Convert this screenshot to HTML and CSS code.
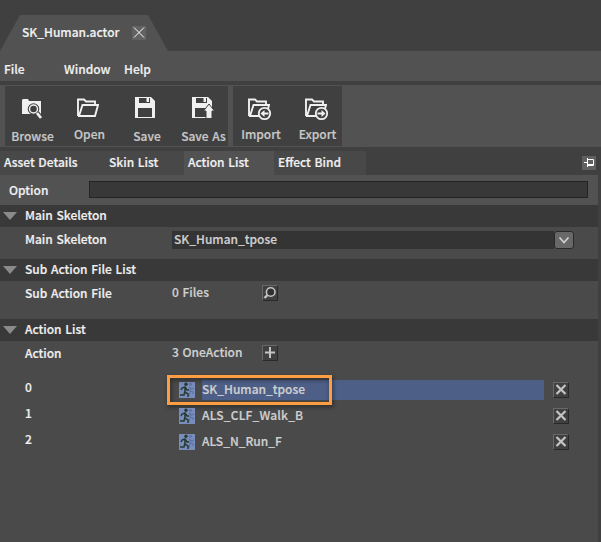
FILE: index.html
```html
<!DOCTYPE html>
<html lang="en">
<head>
<meta charset="utf-8">
<title>SK_Human.actor</title>
<link rel="stylesheet" href="styles.css">
</head>
<body>
<svg class="defs" width="0" height="0">
  <symbol id="floppy" viewBox="0 0 22 22"><path fill="#f0f0f0" fill-rule="evenodd" d="M1 1h16l4 4v17H1zM5 2v5h11V2zM4 12v9h14v-9z"/><path fill="#f0f0f0" d="M12.500 2h2.500v4h-2.500z"/></symbol>
  <symbol id="folder" viewBox="0 0 22 20"><path fill="none" stroke="#f0f0f0" stroke-width="1.900" d="M1 18V1.500h6l2 2h9V7M1 18h17l3-11H5.500L2 18"/></symbol>
  <symbol id="runner" viewBox="0 0 16 16"><path fill="#788dbc" d="M0 0h16v16H0z"/><g fill="none" stroke="#5f73a3" stroke-width="1.100"><circle cx="11.500" cy="2.500" r=".9"/><path d="M10 5l3 2 2-1M11 6v4l-1 4M11 9l3 1v2"/></g><circle cx="7" cy="2.300" r="1.700" fill="#263b30"/><path fill="none" stroke="#263b30" stroke-width="1.500" d="M2 8l1-2 3-1 2 3h2M6 5v5l3 2v3M6 9l-1 4H1"/></symbol>
  <symbol id="cross" viewBox="0 0 16 16"><path stroke="#c4c4c4" stroke-width="2.200" d="M3.500 3l9 9M12.500 3l-9 9"/></symbol>
</svg>
<div class="window">
  <header class="titlebar"><div class="doc-tab"><span class="t doc-name">SK_Human.actor</span><svg class="close" viewBox="0 0 14 14"><path stroke="#fff" d="M2 1.500l10 10M12 1.500l-10 10"/></svg></div></header>
  <nav class="menu"><span class="t m1">File</span><span class="t m2">Window</span><span class="t m3">Help</span></nav>
  <div class="toolbar">
    <div class="group main-tools">
      <div class="tool browse"><svg width="22" height="22" viewBox="0 0 22 22"><path fill="#f0f0f0" d="M1 2l1-1h5l1 2h12v13H1z"/><circle cx="12.500" cy="11" r="5.800" fill="#404040"/><circle cx="12.500" cy="11" r="4" fill="#404040" stroke="#f0f0f0" stroke-width="1.500"/><path stroke="#404040" stroke-width="5" d="M16 15l4 5"/><path stroke="#f0f0f0" stroke-width="2.800" d="M16 15l4 5"/></svg><span class="t">Browse</span></div>
      <div class="tool open"><svg width="22" height="20"><use href="#folder"/></svg><span class="t">Open</span></div>
      <div class="tool save"><svg width="22" height="22"><use href="#floppy"/></svg><span class="t">Save</span></div>
      <div class="tool saveas"><svg width="24" height="23" viewBox="0 0 24 23"><use href="#floppy" width="22" height="22"/><path fill="#f0f0f0" stroke="#404040" stroke-width="1" d="M18 8l5.500 7h-2.500v7.500h-6V15h-2.500z"/></svg><span class="t">Save As</span></div>
    </div>
    <div class="group io-tools">
      <div class="tool import"><svg width="24" height="23" viewBox="0 0 24 23"><use href="#folder" width="22" height="20"/><circle cx="16.500" cy="15.500" r="5.700" fill="#404040" stroke="#f0f0f0" stroke-width="1.800"/><path fill="#f0f0f0" d="M12.500 15.500l4-3.500v2.500h4v2h-4V19z"/></svg><span class="t">Import</span></div>
      <div class="tool export"><svg width="24" height="23" viewBox="0 0 24 23"><use href="#folder" width="22" height="20"/><circle cx="16.500" cy="15.500" r="5.700" fill="#404040" stroke="#f0f0f0" stroke-width="1.800"/><path fill="#f0f0f0" d="M20.500 15.500l-4-3.500v2.500h-4v2h4V19z"/></svg><span class="t">Export</span></div>
    </div>
  </div>
  <div class="tabs"><span class="t tab a">Asset Details</span><span class="t tab b">Skin List</span><span class="t tab c">Action List</span><span class="t tab d">Effect Bind</span><svg class="pin" width="14" height="14"><path fill="#606060" d="M0 0h14v14H0z"/><path fill="none" stroke="#fff" d="M2 6.500h3M5.500 2v9M5.500 3.500h6v6h-6M6 8.500h5"/></svg></div>
  <main class="panel">
    <div class="option"><label class="t">Option</label><div class="field"></div></div>
    <h2 class="t section">Main Skeleton</h2>
    <div class="body skeleton"><span class="t label">Main Skeleton</span><div class="t combo">SK_Human_tpose</div><div class="drop"><svg width="18" height="16"><path fill="none" stroke="#d0d0d0" stroke-width="1.800" d="M4.500 5.500l4.500 5 4.500-5"/></svg></div></div>
    <h2 class="t section">Sub Action File List</h2>
    <div class="body files"><span class="t label">Sub Action File</span><span class="t count">0 Files</span><div class="button"><svg viewBox="0 0 16 16"><circle cx="8.700" cy="7" r="4.300" fill="#303030" stroke="#c4c4c4" stroke-width="1.600"/><path stroke="#c4c4c4" stroke-width="2.400" d="M5.500 10L2.500 13"/></svg></div></div>
    <h2 class="t section">Action List</h2>
    <div class="body actions"><span class="t label">Action</span><span class="t count">3 OneAction</span><div class="button"><svg viewBox="0 0 16 16"><path stroke="#c4c4c4" stroke-width="2" d="M3 7.500h10M8 2v11"/></svg></div></div>
    <div class="list">
      <div class="row selected"><span class="t index">0</span><svg class="run"><use href="#runner"/></svg><span class="t name">SK_Human_tpose</span><div class="button"><svg><use href="#cross"/></svg></div><div class="highlight"></div></div>
      <div class="row"><span class="t index">1</span><svg class="run"><use href="#runner"/></svg><span class="t name wide">ALS_CLF_Walk_B</span><div class="button"><svg><use href="#cross"/></svg></div></div>
      <div class="row"><span class="t index">2</span><svg class="run"><use href="#runner"/></svg><span class="t name">ALS_N_Run_F</span><div class="button"><svg><use href="#cross"/></svg></div></div>
    </div>
  </main>
</div>
</body>
</html>
```
FILE: styles.css
```css
* { box-sizing: border-box; }
body { margin: 0; background: #404040; color: #f0f0f0; font: 500 12px/20px "Noto Sans CJK SC", "Noto Sans", sans-serif; word-spacing: 1px; -webkit-text-stroke: 0.2px currentColor; }
svg { display: block; flex: none; }
.defs { position: absolute; }
.t { white-space: nowrap; }
.window { width: 601px; height: 542px; overflow: hidden; display: flex; flex-direction: column; }
.titlebar { height: 51px; padding-top: 15px; flex: none; }
.doc-tab { width: 168px; height: 36px; background: #525252; clip-path: polygon(20px 0, 148px 0, 168px 100%, 0 100%); display: flex; padding: 8px 0 0 22px; }
.doc-name { width: 110px; line-height: 18px; }
.close { width: 14px; height: 14px; background: #626262; margin-top: 3px; }
.menu { height: 30px; background: #525252; display: flex; padding: 8px 0 0 4px; flex: none; }
.m1 { width: 60px; }
.m2 { width: 60px; }
.toolbar { height: 62px; margin: 4px 0; background: #525252; display: flex; gap: 5px; padding: 1px 0 1px 5px; flex: none; }
.group { background: #404040; display: flex; height: 60px; color: #c8c8c8; }
.main-tools { width: 223px; }
.io-tools { width: 109px; }
.tool { display: flex; flex-direction: column; align-items: center; width: 57px; flex: none; }
.tool .t { margin-top: auto; }
.tool svg { margin-left: -3px; }
.browse { padding: 12px 0 0; width: 55px; }
.browse svg { margin-left: -1px; }
.open { padding: 12px 0 2px; width: 59px; }
.save { padding: 10px 0 0; width: 56px; }
.save svg { margin-left: -5px; }
.saveas { padding: 10px 0 0; }
.saveas svg { margin-left: -2px; }
.io-tools .tool { padding: 12px 0 2px; }
.io-tools svg { margin-left: -2px; }
.import { width: 56px; }
.tabs { height: 24px; display: flex; flex: none; }
.tab { background: #484848; line-height: 21px; }
.a { width: 105px; padding-left: 4px; }
.b { width: 79px; padding-left: 4px; }
.c { width: 90px; padding-left: 4px; background: #525252; }
.d { width: 92px; padding-left: 4px; }
.pin { margin: 9px 5px 0 auto; margin-top: 9px; }
.panel { width: 598px; flex: 1; background: #4a4a4a; }
.tabs .pin { margin-top: 5px; }
.option { height: 30px; background: #525252; display: flex; padding: 6px 0 0 9px; }
.option label { width: 80px; line-height: 17px; }
.field { width: 499px; height: 17px; background: #383838; border: 1px solid #242424; }
.section { font: inherit; margin: 0; height: 22px; background: #393939; padding-left: 3px; display: flex; align-items: center; gap: 8px; padding-bottom: 2px; }
.section::before { content: ""; width: 14px; height: 8px; margin-top: 2px; background: #8a8a8a; clip-path: polygon(0 0, 100% 0, 50% 100%); }
.body { display: flex; padding: 4px 0 0 25px; }
.label { width: 147px; line-height: 16px; }
.skeleton { height: 32px; }
.combo { width: 382px; height: 18px; line-height: 16px; background: #343434; padding-left: 2px; color: #d0d0d0; }
.drop { width: 20px; height: 18px; background: #686868; border: 1px solid #2a2a2a; border-radius: 3px; }
.files { height: 38px; }
.actions { height: 39px; }
.count { width: 90px; line-height: 14px; color: #d0d0d0; }
.button { width: 16px; height: 16px; background: #404040; border: 1px solid; border-color: #686868 #292929 #292929 #686868; }
.button svg { width: 16px; height: 16px; margin: -1px; }
.row { display: flex; height: 20px; margin-bottom: 6px; padding-left: 25px; align-items: center; position: relative; }
.index { width: 154px; line-height: 14px; align-self: flex-start; }
.run { width: 16px; height: 16px; margin: 0 7px 0 0; }
.name { width: 342px; height: 20px; line-height: 18px; color: #d0d0d0; }
.wide { letter-spacing: 0.2px; }
.selected .name { background: #4d5f87; }
.row .button { margin-left: 9px; }
.highlight { position: absolute; left: 167px; top: -5px; width: 165px; height: 30px; border: 3px solid #ff9d42; filter: drop-shadow(1px 2px 2px rgba(0,0,0,.5)); }
```
